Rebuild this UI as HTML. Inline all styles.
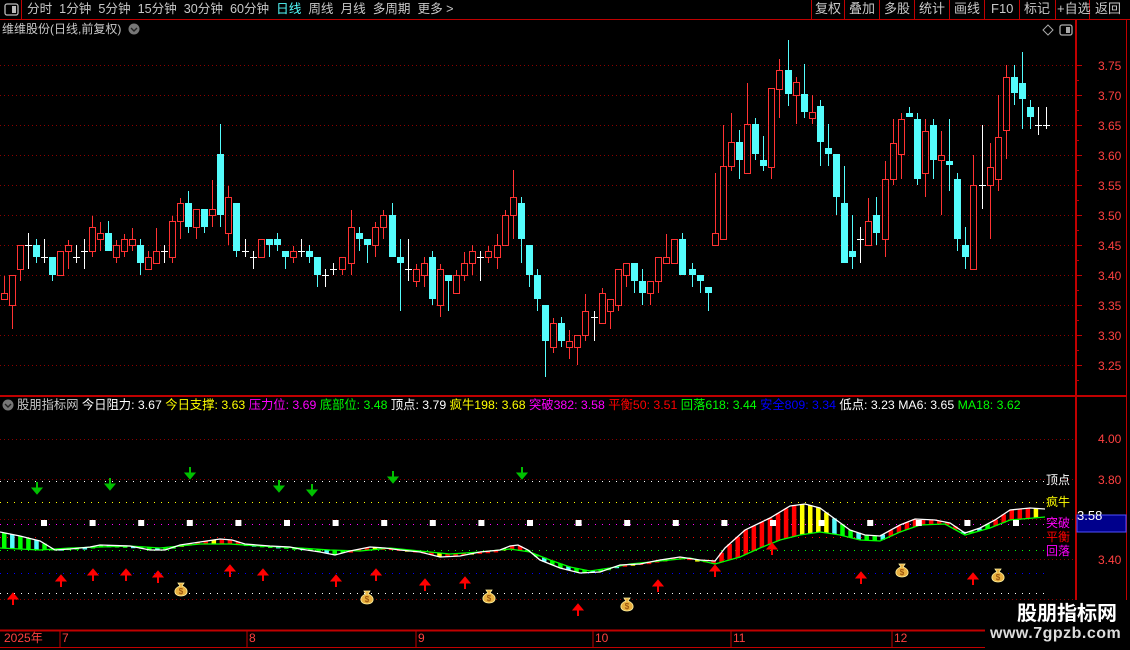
<!DOCTYPE html>
<html><head><meta charset="utf-8">
<style>
body{margin:0;background:#000;width:1130px;height:650px;overflow:hidden;font-family:"Liberation Sans","Noto Sans CJK SC",sans-serif;}
svg{position:absolute;left:0;top:0}
.t{position:absolute;font-size:12px;white-space:nowrap;line-height:14px}
.b{font-size:13px}
</style></head><body>
<svg id="s" width="1130" height="650" xmlns="http://www.w3.org/2000/svg">
<line x1="0" y1="19.5" x2="1130" y2="19.5" stroke="#c00000"/>
<line x1="21.5" y1="0" x2="21.5" y2="19" stroke="#c00000"/>
<rect x="5" y="4" width="13" height="11" rx="2" fill="none" stroke="#bbb" stroke-width="1.3"/>
<rect x="12" y="6" width="4" height="7" fill="#bbb"/>
<g stroke="#c00000"><line x1="811.5" y1="0" x2="811.5" y2="19"/><line x1="844.5" y1="0" x2="844.5" y2="19"/><line x1="879.5" y1="0" x2="879.5" y2="19"/><line x1="914.5" y1="0" x2="914.5" y2="19"/><line x1="949.5" y1="0" x2="949.5" y2="19"/><line x1="984.5" y1="0" x2="984.5" y2="19"/><line x1="1019.5" y1="0" x2="1019.5" y2="19"/><line x1="1055.5" y1="0" x2="1055.5" y2="19"/><line x1="1089.5" y1="0" x2="1089.5" y2="19"/></g>
<line x1="1076" y1="20" x2="1076" y2="650" stroke="#c00000" stroke-width="2"/>
<line x1="1126.5" y1="20" x2="1126.5" y2="650" stroke="#c00000"/>
<line x1="0" y1="396" x2="1127" y2="396" stroke="#c00000" stroke-width="2"/>
<circle cx="134" cy="29" r="5.5" fill="#777"/><path d="M131 28l3 3 3-3" stroke="#222" fill="none" stroke-width="1.4"/>
<circle cx="8" cy="405" r="5.5" fill="#777"/><path d="M5 404l3 3 3-3" stroke="#222" fill="none" stroke-width="1.4"/>
<path d="M1048 25l5 5-5 5-5-5z" fill="none" stroke="#aaa"/>
<rect x="1060" y="25" width="12" height="10" rx="2" fill="none" stroke="#aaa" stroke-width="1.3"/><rect x="1066" y="27" width="4" height="6" fill="#aaa"/>
<g id="grid"></g>
<g id="cand"></g>
<g id="ind"></g>
<rect x="1077" y="515" width="49" height="17" fill="#00008c" stroke="#5050ff"/>
<line x1="0" y1="630.5" x2="1076" y2="630.5" stroke="#c00000" stroke-width="2"/>
<line x1="0" y1="647.5" x2="1076" y2="647.5" stroke="#c00000"/>
<g stroke="#c00000"><line x1="60" y1="630" x2="60" y2="648"/><line x1="247" y1="630" x2="247" y2="648"/><line x1="416" y1="630" x2="416" y2="648"/><line x1="593" y1="630" x2="593" y2="648"/><line x1="731" y1="630" x2="731" y2="648"/><line x1="892" y1="630" x2="892" y2="648"/></g>
<rect x="985" y="600" width="145" height="50" fill="#000"/>
</svg>
<div class="t" style="left:27px;top:2px;color:#c8c8c8;font-size:12.6px">分时&nbsp;&nbsp;1分钟&nbsp;&nbsp;5分钟&nbsp;&nbsp;15分钟&nbsp;&nbsp;30分钟&nbsp;&nbsp;60分钟&nbsp;&nbsp;<span style="color:#54fcfc">日线</span>&nbsp;&nbsp;周线&nbsp;&nbsp;月线&nbsp;&nbsp;多周期&nbsp;&nbsp;更多 &gt;</div>
<div class="t b" style="left:815px;top:2px;color:#c8c8c8">复权</div>
<div class="t b" style="left:849px;top:2px;color:#c8c8c8">叠加</div>
<div class="t b" style="left:884px;top:2px;color:#c8c8c8">多股</div>
<div class="t b" style="left:919px;top:2px;color:#c8c8c8">统计</div>
<div class="t b" style="left:954px;top:2px;color:#c8c8c8">画线</div>
<div class="t b" style="left:991px;top:2px;color:#c8c8c8">F10</div>
<div class="t b" style="left:1024px;top:2px;color:#c8c8c8">标记</div>
<div class="t b" style="left:1057px;top:2px;color:#c8c8c8">+自选</div>
<div class="t b" style="left:1095px;top:2px;color:#c8c8c8">返回</div>
<div class="t" style="left:2px;top:22px;color:#c8c8c8">维维股份(日线,前复权)</div>
<div class="t" style="left:17px;top:398px;color:#c8c8c8;font-size:12.3px">股朋指标网 <span style="color:#fff">今日阻力: 3.67</span> <span style="color:#ff0">今日支撑: 3.63</span> <span style="color:#f0f">压力位: 3.69</span> <span style="color:#0f0">底部位: 3.48</span> <span style="color:#fff">顶点: 3.79</span> <span style="color:#ff0">疯牛198: 3.68</span> <span style="color:#f0f">突破382: 3.58</span> <span style="color:#f00">平衡50: 3.51</span> <span style="color:#0f0">回落618: 3.44</span> <span style="color:#00f">安全809: 3.34</span> <span style="color:#fff">低点: 3.23</span> <span style="color:#fff">MA6: 3.65</span> <span style="color:#0f0">MA18: 3.62</span></div>
<div id="ax"></div>
<div class="t" style="left:1046px;top:473px;color:#fff">顶点</div>
<div class="t" style="left:1046px;top:495px;color:#ff0">疯牛</div>
<div class="t" style="left:1046px;top:516px;color:#f0f">突破</div>
<div class="t" style="left:1046px;top:530px;color:#f00">平衡</div>
<div class="t" style="left:1046px;top:544px;color:#f0f">回落</div>
<div class="t" style="left:1098px;top:432px;color:#ff4040">4.00</div>
<div class="t" style="left:1098px;top:473px;color:#ff4040">3.80</div>
<div class="t" style="left:1098px;top:553px;color:#ff4040">3.40</div>
<div class="t" style="left:1077px;top:509px;color:#fff;font-size:13px">3.58</div>
<div class="t" style="left:4px;top:631px;color:#ff4040">2025年</div>
<div class="t" style="left:62px;top:631px;color:#ff4040">7</div>
<div class="t" style="left:249px;top:631px;color:#ff4040">8</div>
<div class="t" style="left:418px;top:631px;color:#ff4040">9</div>
<div class="t" style="left:595px;top:631px;color:#ff4040">10</div>
<div class="t" style="left:733px;top:631px;color:#ff4040">11</div>
<div class="t" style="left:894px;top:631px;color:#ff4040">12</div>
<div class="t" style="left:1017px;top:603px;color:#fff;font-size:20px;font-weight:bold;line-height:22px">股朋指标网</div>
<div class="t" style="left:990px;top:625px;color:#ddd;font-size:16px;font-weight:bold;line-height:18px;letter-spacing:0.5px">www.7gpzb.com</div>
<script>
const NS="http://www.w3.org/2000/svg";
function el(p,t,a){const e=document.createElementNS(NS,t);for(const k in a)e.setAttribute(k,a[k]);p.appendChild(e);return e;}
const g=document.getElementById('grid'),ax=document.getElementById('ax');
for(let i=0;i<=10;i++){const y=65+i*30+0.5;el(g,'line',{x1:0,y1:y,x2:1075,y2:y,stroke:'#8a0000','stroke-dasharray':'1 3'});
 const d=document.createElement('div');d.className='t';d.style.cssText='left:1098px;top:'+(y-7)+'px;color:#ff4040';d.textContent=(3.75-i*0.05).toFixed(2);ax.appendChild(d);
 el(g,'line',{x1:1076,y1:y,x2:1082,y2:y,stroke:'#c00000'});el(g,'line',{x1:1076,y1:y+15,x2:1079,y2:y+15,stroke:'#c00000'});}
[[481,'#fff'],[479,'#8a0000'],[502,'#ff0'],[519,'#8a0000'],[524,'#f0f'],[537,'#f00'],[550,'#0f0'],[559,'#8a0000'],[573,'#00f'],[593,'#fff'],[599,'#8a0000'],[439,'#8a0000']].forEach(([y,c])=>{
 el(g,'line',{x1:0,y1:y+0.5,x2:(c=='#8a0000'?1075:1045),y2:y+0.5,stroke:c,'stroke-dasharray':(c=='#8a0000'?'1 3':'1 6')});});
const A=[[4,'r',293,299,276,299],[12,'r',275,305,275,329],[20,'r',245,269,245,281],[28,'w',245,245,233,269],[36,'c',245,257,239,263],[44,'w',257,257,239,263],[52,'c',257,275,257,281],[60,'r',251,275,251,275],[68,'r',245,251,240,269],[76,'w',257,257,245,263],[84,'w',251,251,239,269],[92,'r',227,251,216,257],[100,'r',233,239,222,251],[108,'c',233,251,221,251],[116,'r',245,257,240,263],[124,'r',239,251,234,257],[132,'r',239,245,228,251],[140,'c',245,263,239,275],[148,'r',257,269,251,269],[156,'r',251,263,228,263],[164,'w',251,251,245,263],[172,'r',221,257,216,263],[180,'r',203,221,198,239],[188,'c',203,227,191,233],[196,'r',209,227,209,239],[204,'c',209,227,209,233],[212,'r',209,215,180,227],[220,'c',154,215,124,227],[228,'r',197,233,186,245],[236,'c',203,251,203,257],[245,'w',251,251,239,257],[253,'w',257,257,251,269],[261,'r',239,257,239,257],[269,'c',239,245,239,257],[277,'c',239,245,233,251],[285,'c',251,257,251,269],[293,'r',251,257,246,263],[301,'w',251,251,239,257],[309,'c',251,257,245,263],[317,'c',257,275,257,287],[325,'w',275,275,269,287],[333,'w',269,269,263,275],[342,'r',257,269,257,275],[351,'r',227,263,210,275],
[359,'c',233,239,227,251],[367,'c',239,245,239,263],[375,'r',227,245,222,257],[383,'r',215,227,210,239],[392,'c',215,257,203,257],[400,'c',257,263,239,311],[408,'w',269,269,239,281],[416,'r',269,281,264,287],[424,'r',263,275,257,287],[432,'c',257,299,251,305],[440,'r',269,305,264,317],[448,'c',275,281,275,311],[456,'r',275,293,270,293],[464,'r',263,275,252,281],[472,'r',251,263,245,275],[480,'w',257,257,251,281],[488,'r',251,257,246,263],[497,'r',245,257,234,269],[505,'r',215,245,210,245],[513,'r',197,215,170,239],[521,'c',203,239,197,263],[529,'c',245,275,245,287],[537,'c',275,299,269,311],[545,'c',305,341,305,377],[553,'r',323,347,318,353],[561,'c',323,341,317,347],[569,'r',341,347,330,359],[577,'r',335,347,335,365],[585,'r',311,335,294,341],[594,'w',317,317,311,341],[602,'r',293,323,288,323],[610,'r',299,311,299,329],[618,'r',269,305,269,311],[626,'r',263,275,263,287],[634,'c',263,281,263,293],[642,'c',281,293,269,305],[650,'r',281,293,281,305],[658,'r',257,281,257,293],[666,'r',257,263,234,263],[674,'r',239,263,239,263],[682,'c',239,275,233,275],[692,'c',269,275,263,287],[700,'c',275,281,275,293],[708,'c',287,293,287,311],
[715,'r',233,245,173,245],[723,'r',166,239,125,239],[731,'r',142,166,113,171],[739,'c',142,160,130,179],[747,'r',124,173,83,173],[755,'c',124,154,118,160],[763,'c',160,166,136,171],[771,'r',88,167,88,179],[779,'r',70,89,59,118],[788,'c',70,94,40,106],[796,'r',82,95,77,124],[804,'c',94,112,64,118],[812,'r',112,118,95,124],[820,'c',106,142,100,166],[828,'c',148,154,124,166],[836,'c',154,197,154,215],[844,'c',203,263,166,263],[852,'c',251,257,215,269],[860,'w',239,239,227,263],[868,'r',221,245,198,245],[876,'c',215,233,197,245],[885,'r',179,239,161,257],[893,'r',143,179,119,185],[901,'r',119,154,113,179],[909,'c',113,117,107,117],[917,'c',119,179,113,185],[925,'r',131,173,119,197],[933,'c',125,160,119,179],[941,'r',155,160,131,215],[949,'c',161,165,119,191],[957,'c',179,239,173,251],[965,'c',245,257,227,269],[973,'r',185,269,155,269],[982,'w',185,185,125,209],[990,'r',167,185,143,239],[998,'r',137,179,95,191],[1006,'r',77,130,65,159],[1014,'c',77,93,65,105],[1022,'c',83,99,52,129],[1030,'c',107,117,100,129],[1038,'w',125,125,107,135],[1046,'w',125,125,107,129]];
const C=document.getElementById('cand');
A.forEach(([x,t,a,b,h,l])=>{const X=x+0.5;
 if(t=='r'){el(C,'line',{x1:X,y1:h,x2:X,y2:a,stroke:'#ff3232'});el(C,'line',{x1:X,y1:b,x2:X,y2:l,stroke:'#ff3232'});el(C,'rect',{x:x-2.5,y:a+0.5,width:6,height:Math.max(b-a,1),fill:'none',stroke:'#ff3232'});}
 else if(t=='c'){el(C,'line',{x1:X,y1:h,x2:X,y2:l,stroke:'#54fcfc'});el(C,'rect',{x:x-3,y:a,width:7,height:Math.max(b-a,2),fill:'#54fcfc'});}
 else{el(C,'line',{x1:X,y1:h,x2:X,y2:l,stroke:'#fff'});el(C,'line',{x1:x-3,y1:a+0.5,x2:x+4,y2:a+0.5,stroke:'#fff'});}});
const W=[[0,532],[20,536],[40,541],[55,550],[70,549],[90,547],[100,545],[130,546],[150,550],[165,550],[180,545],[200,542],[220,539],[232,540],[245,544],[270,546],[290,547],[300,549],[320,552],[335,555],[350,551],[370,547],[385,548],[400,550],[420,552],[440,557],[460,556],[480,552],[500,550],[510,546],[518,545],[528,550],[540,560],[560,568],[580,573],[600,572],[620,565],[640,564],[660,560],[680,557],[700,560],[715,561],[725,548],[745,530],[770,518],[790,506],[805,504],[820,508],[835,519],[850,530],[865,535],[880,536],[900,525],[915,519],[935,520],[950,523],[965,533],[980,528],[995,520],[1010,510],[1030,508],[1045,509]];
const G=[[0,548],[40,550],[70,548],[100,547],[130,546],[160,548],[180,546],[200,544],[230,544],[260,546],[300,548],[330,550],[360,551],[390,548],[420,551],[450,554],[480,552],[510,549],[530,552],[550,560],[570,567],[590,571],[610,568],[630,564],[660,561],[690,558],[715,564],[740,557],[760,548],[780,540],[800,535],[820,532],[840,535],[860,540],[880,541],[900,532],[920,525],[945,524],[965,535],[990,528],[1010,520],[1045,517]];
function f(P,x){for(let i=1;i<P.length;i++){if(x<=P[i][0]){const [a,b]=P[i-1],[c,d]=P[i];return b+(d-b)*(x-a)/(c-a);}}return P[P.length-1][1];}
const I=document.getElementById('ind');
function col(x){const R=[[180,'g'],[245,'r'],[350,'g'],[420,'r'],[520,'r'],[620,'g'],[715,'r'],[800,'r'],[830,'y'],[890,'g'],[960,'r'],[990,'g'],[1030,'r'],[1050,'y']];for(const [e,c] of R)if(x<e)return c;return 'r';}
for(let x=4;x<=1042;x+=8.06){const w=f(W,x),gg=f(G,x);let c=col(x);let k=Math.round((x-4)/8.06);
 let cc=c=='g'?(k%3==1?'#54fcfc':'#00ff00'):c=='y'?'#ffff00':(k%4==2&&x<700?'#ffff00':'#ff0000');
 if(x>960&&x<990&&k%2)cc='#54fcfc';
 const y1=Math.min(w,gg),y2=Math.max(w,gg);el(I,'rect',{x:x-2,y:y1,width:4.5,height:Math.max(y2-y1,2),fill:cc});}
el(I,'polyline',{points:G.map(p=>p.join(',')).join(' '),fill:'none',stroke:'#00ff00','stroke-width':1.3});
el(I,'polyline',{points:W.map(p=>p.join(',')).join(' '),fill:'none',stroke:'#fff','stroke-width':1.3});
for(let x=44;x<1040;x+=48.6)el(I,'rect',{x:x-3,y:520,width:6,height:6,fill:'#fff'});
[[37,482],[110,478],[190,467],[279,480],[312,484],[393,471],[522,467]].forEach(([x,y])=>{el(I,'line',{x1:x,y1:y,x2:x,y2:y+7,stroke:'#00c000','stroke-width':2});el(I,'path',{d:`M${x-5} ${y+6}L${x} ${y+12}L${x+5} ${y+6}z`,fill:'#00c000',stroke:'#00c000'});});
[[13,593],[61,575],[93,569],[126,569],[158,571],[230,565],[263,569],[336,575],[376,569],[425,579],[465,577],[578,604],[658,580],[715,565],[772,543],[861,572],[973,573]].forEach(([x,y])=>{el(I,'line',{x1:x,y1:y+3,x2:x,y2:y+12,stroke:'#f00','stroke-width':2});el(I,'path',{d:`M${x-5} ${y+6}L${x} ${y}L${x+5} ${y+6}z`,fill:'#f00',stroke:'#f00'});});
[[181,590],[367,598],[489,597],[627,605],[902,571],[998,576]].forEach(([x,y])=>{el(I,'path',{d:`M${x-3} ${y-7}L${x+3} ${y-7}L${x+1} ${y-4}C${x+8} ${y-2} ${x+8} ${y+6} ${x} ${y+6}C${x-8} ${y+6} ${x-8} ${y-2} ${x-1} ${y-4}z`,fill:'#e8b040',stroke:'#fff2a0','stroke-width':0.8});const t=el(I,'text',{x:x,y:y+4,'font-size':8,'text-anchor':'middle',fill:'#8a4000','font-family':'Liberation Sans'});t.textContent='$';});
</script>
</body></html>
